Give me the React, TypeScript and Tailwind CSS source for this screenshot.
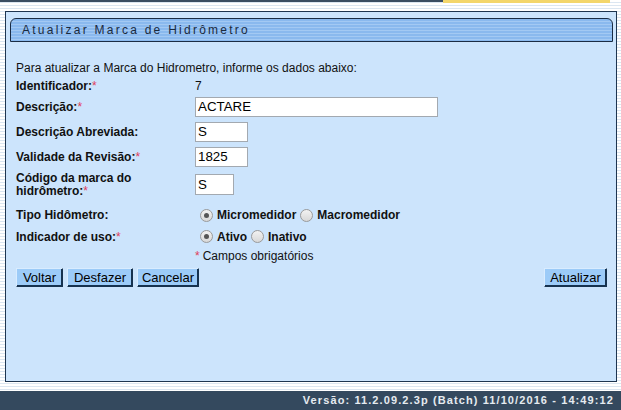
import React from "react";

const Req = () => <span className="text-[#e0405a] font-normal">*</span>;

function Radio({ checked }: { checked?: boolean }) {
  return (
    <span className="inline-flex items-center justify-center w-[13px] h-[13px] rounded-full border border-[#9a9a9a] bg-[linear-gradient(#f2f2f2,#d8d8d8)] mr-[4px] shrink-0">
      {checked ? <span className="w-[5px] h-[5px] rounded-full bg-[#555]" /> : null}
    </span>
  );
}

function Btn({ children, w }: { children: React.ReactNode; w: string }) {
  return (
    <button
      className={`${w} h-[19px] bg-[#9ccbf8] border border-[#16324f] border-t-[#d9ecff] border-l-[#d9ecff] shadow-[inset_-1px_-1px_0_#16324f] text-[13px] text-black leading-none flex items-center justify-center`}
    >
      {children}
    </button>
  );
}

export default function App() {
  return (
    <div className="w-[621px] h-[410px] overflow-hidden flex flex-col bg-[repeating-linear-gradient(to_bottom,#ffffff_0px,#ffffff_2px,#dbe6f1_2px,#dbe6f1_3px)] font-['Liberation_Sans',Arial,sans-serif]">
      {/* top strip */}
      <div className="flex h-[3px] shrink-0">
        <div className="w-[443px] h-[2px] bg-[#3a4d62]" />
        <div className="w-[167px] h-[3px] bg-[#f3d66b]" />
      </div>

      {/* main panel */}
      <div className="pl-[5px] pt-[8px] flex-1 flex flex-col">
        <div className="w-[612px] h-[371px] border border-[#1e3550] bg-[#cce4fc] flex flex-col pt-[6px] pl-[4px] pr-[3px]">
          <div className="h-[24px] rounded-t-[6px] border border-[#1a2c44] bg-[repeating-linear-gradient(to_bottom,#8ab9ee_0px,#8ab9ee_2px,#a3c9f3_2px,#a3c9f3_3px)] flex items-center pl-[11px]">
            <span className="text-[12px] tracking-[2.25px] text-[#1a2a3e]">Atualizar Marca de Hidrômetro</span>
          </div>

          <div className="pl-[6px] pr-[4px] pt-[18px] text-[12px] text-[#111]">
            <div className="h-[16px] flex items-center">
              Para atualizar a Marca do Hidrometro, informe os dados abaixo:
            </div>

            <div className="grid grid-cols-[179px_1fr]">
              <div className="h-[20px] flex items-center font-bold">Identificador:<Req /></div>
              <div className="h-[20px] flex items-center">7</div>

              <div className="h-[21px] flex items-center font-bold">Descrição:<Req /></div>
              <div className="h-[21px] flex items-center">
                <div className="w-[243px] h-[20px] bg-white border border-[#a3a9b0] flex items-center pl-[2px] text-[13.33px] text-black">ACTARE</div>
              </div>

              <div className="h-[29px] flex items-center font-bold">Descrição Abreviada:</div>
              <div className="h-[29px] flex items-center">
                <div className="w-[53px] h-[20px] bg-white border border-[#a3a9b0] flex items-center pl-[2px] text-[13.33px] text-black">S</div>
              </div>

              <div className="h-[21px] flex items-center font-bold">Validade da Revisão:<Req /></div>
              <div className="h-[21px] flex items-center">
                <div className="w-[53px] h-[20px] bg-white border border-[#a3a9b0] flex items-center pl-[2px] text-[13.33px] text-black">1825</div>
              </div>

              <div className="h-[35px] flex items-center font-bold leading-[13px]">
                <span>Código da marca do<br />hidrômetro:<Req /></span>
              </div>
              <div className="h-[35px] flex items-center">
                <div className="w-[39px] h-[21px] bg-white border border-[#a3a9b0] flex items-center pl-[2px] text-[13.33px] text-black">S</div>
              </div>

              <div className="h-[26px] flex items-center font-bold">Tipo Hidômetro:</div>
              <div className="h-[26px] flex items-center font-bold pl-[5px]">
                <Radio checked />
                <span className="mr-[4px]">Micromedidor</span>
                <Radio />
                <span>Macromedidor</span>
              </div>

              <div className="h-[17px] flex items-center font-bold">Indicador de uso:<Req /></div>
              <div className="h-[17px] flex items-center font-bold pl-[5px]">
                <Radio checked />
                <span className="mr-[4px]">Ativo</span>
                <Radio />
                <span>Inativo</span>
              </div>

              <div className="h-[21px]" />
              <div className="h-[21px] flex items-center">
                <Req />
                <span className="ml-[3px]">Campos obrigatórios</span>
              </div>
            </div>

            <div className="flex items-center justify-between mt-[2px] pr-[2px]">
              <div className="flex gap-[4px]">
                <Btn w="w-[47px]">Voltar</Btn>
                <Btn w="w-[66px]">Desfazer</Btn>
                <Btn w="w-[62px]">Cancelar</Btn>
              </div>
              <Btn w="w-[63px]">Atualizar</Btn>
            </div>
          </div>
        </div>
      </div>

      {/* footer */}
      <div className="h-[19px] shrink-0 bg-[#34495e] flex items-center justify-end pr-[7px]">
        <span className="text-[11px] font-bold tracking-[1.1px] text-[#e6ebf0]">
          Versão: 11.2.09.2.3p (Batch) 11/10/2016 - 14:49:12
        </span>
      </div>
    </div>
  );
}
